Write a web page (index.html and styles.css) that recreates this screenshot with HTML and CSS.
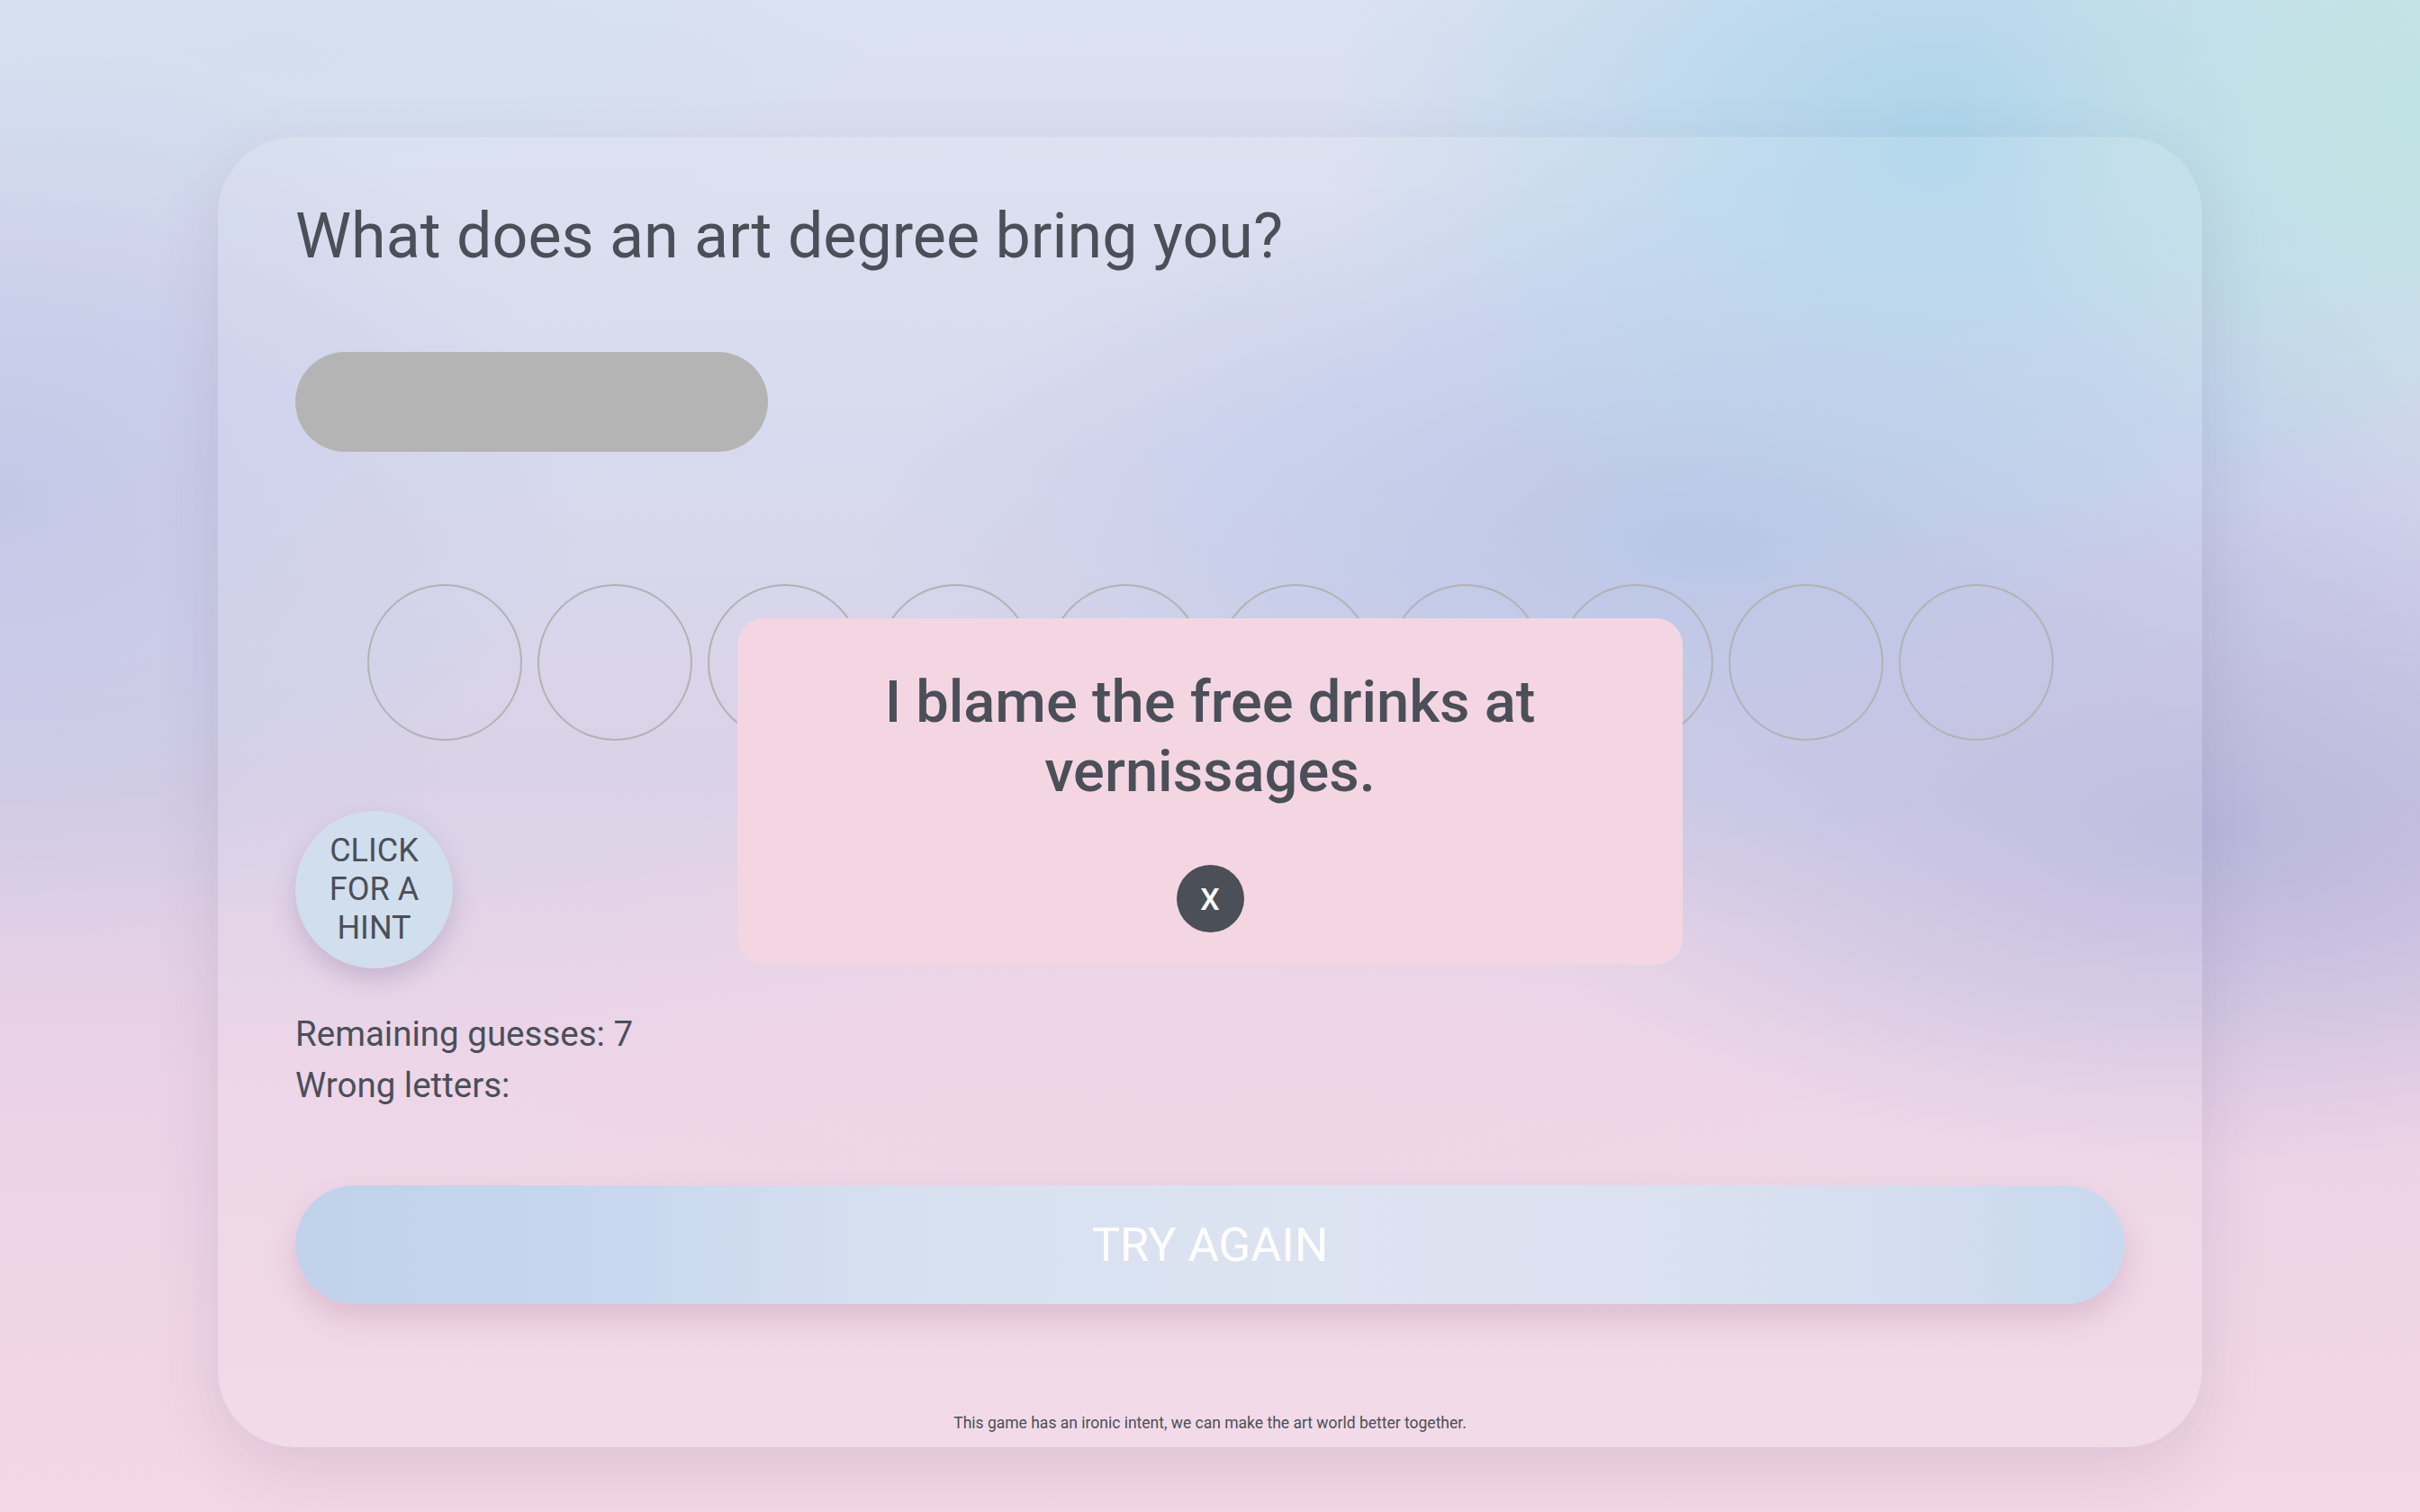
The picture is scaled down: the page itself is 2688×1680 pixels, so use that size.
FILE: index.html
```html
<!DOCTYPE html>
<html lang="en">
<head>
<meta charset="utf-8">
<title>Art degree hangman</title>
<link rel="stylesheet" href="styles.css">
</head>
<body>
<div class="page">
  <main class="card">
    <h1 class="question">What does an art degree bring you?</h1>
    <div class="answer-field"></div>
    <div class="slots">
      <span class="slot"></span><span class="slot"></span><span class="slot"></span><span class="slot"></span><span class="slot"></span><span class="slot"></span><span class="slot"></span><span class="slot"></span><span class="slot"></span><span class="slot"></span>
    </div>
    <button class="hint">CLICK<br>FOR A<br>HINT</button>
    <div class="stats">
      <p>Remaining guesses: 7</p>
      <p>Wrong letters:</p>
    </div>
    <button class="retry">TRY AGAIN</button>
    <p class="footer">This game has an ironic intent, we can make the art world better together.</p>

    <div class="modal">
      <p class="modal-text">I blame the free drinks at vernissages.</p>
      <button class="close">X</button>
    </div>
  </main>
</div>
</body>
</html>
```
FILE: styles.css
```css
html, body {
  margin: 0;
  padding: 0;
}
body {
  width: 2688px;
  height: 1680px;
  overflow: hidden;
  font-family: Roboto, "Liberation Sans", sans-serif;
  color: #4a4f58;
  background:
    radial-gradient(ellipse 650px 560px at 2688px 120px, rgba(190,228,226,0.95), rgba(190,228,226,0) 78%),
    radial-gradient(ellipse 900px 650px at 2150px 160px, rgba(170,212,234,0.95), rgba(170,212,234,0) 75%),
    radial-gradient(ellipse 1100px 520px at 2450px 920px, rgba(184,182,220,0.95), rgba(184,182,220,0) 72%),
    radial-gradient(ellipse 1300px 600px at 1900px 600px, rgba(174,190,228,0.9), rgba(174,190,228,0) 72%),
    radial-gradient(ellipse 900px 700px at 0px 550px, rgba(192,198,230,0.85), rgba(192,198,230,0) 72%),
    radial-gradient(ellipse 900px 300px at 300px 60px, rgba(210,222,238,0.9), rgba(210,222,238,0) 75%),
    radial-gradient(ellipse 1200px 500px at 1300px 1150px, rgba(240,208,228,0.7), rgba(240,208,228,0) 72%),
    linear-gradient(180deg, #dbe2f1 0%, #d3d6ec 30%, #d6cde5 52%, #ead2e6 70%, #f4d7e6 100%);
}
.page {
  display: flex;
  justify-content: center;
  padding-top: 152px;
}
.card {
  position: relative;
  box-sizing: border-box;
  width: 2204px;
  height: 1456px;
  padding: 67px 86px 0;
  border-radius: 86px;
  background: rgba(255,255,255,0.1);
  box-shadow: 0 24px 70px rgba(90,80,120,0.14);
  display: flex;
  flex-direction: column;
  align-items: flex-start;
}
.question {
  margin: 0;
  font-size: 70px;
  line-height: 86px;
  font-weight: 400;
}
.answer-field {
  margin-top: 86px;
  width: 525px;
  height: 111px;
  border-radius: 56px;
  background: #b4b4b4;
}
.slots {
  margin-top: 147px;
  align-self: stretch;
  display: flex;
  justify-content: center;
  gap: 17px;
}
.slot {
  box-sizing: border-box;
  width: 172px;
  height: 174px;
  border-radius: 50%;
  border: 2.5px solid #b2b2b4;
}
.hint {
  margin-top: 78px;
  width: 175px;
  height: 175px;
  border-radius: 50%;
  border: none;
  background: #d1deed;
  color: #4a4f58;
  font-family: Roboto, "Liberation Sans", sans-serif;
  font-size: 36px;
  line-height: 43px;
  padding: 0;
  box-shadow: 0 12px 26px rgba(120,100,140,0.28);
}
.stats {
  margin-top: 44px;
}
.stats p {
  margin: 0;
  font-size: 38.5px;
  line-height: 57px;
}
.retry {
  margin-top: 83px;
  align-self: stretch;
  height: 132px;
  border: none;
  border-radius: 66px;
  background: linear-gradient(90deg, #c0d2ea 0%, #c6d6ee 15%, #d6e0f0 33%, #dbe3f1 50%, #dde2f1 66%, #d6dff0 85%, #c8d8ee 100%);
  color: #ffffff;
  font-family: Roboto, "Liberation Sans", sans-serif;
  font-size: 52.5px;
  font-weight: 400;
  box-shadow: 0 16px 30px rgba(160,110,140,0.25);
}
.footer {
  margin: 121px 0 0;
  align-self: stretch;
  text-align: center;
  font-size: 17.5px;
  line-height: 22px;
}
.modal {
  position: absolute;
  top: 535px;
  left: 50%;
  margin-left: -525px;
  box-sizing: border-box;
  width: 1050px;
  height: 385px;
  padding: 55px 100px 0;
  border-radius: 30px;
  background: #f4d6e2;
  display: flex;
  flex-direction: column;
  align-items: center;
}
.modal-text {
  margin: 0;
  text-align: center;
  font-size: 65px;
  line-height: 77px;
  font-weight: 500;
}
.close {
  margin-top: 65px;
  width: 75px;
  height: 75px;
  border-radius: 50%;
  border: none;
  padding: 0;
  background: #4a4f58;
  color: #ffffff;
  font-family: Roboto, "Liberation Sans", sans-serif;
  font-size: 34px;
  font-weight: 500;
}
```
